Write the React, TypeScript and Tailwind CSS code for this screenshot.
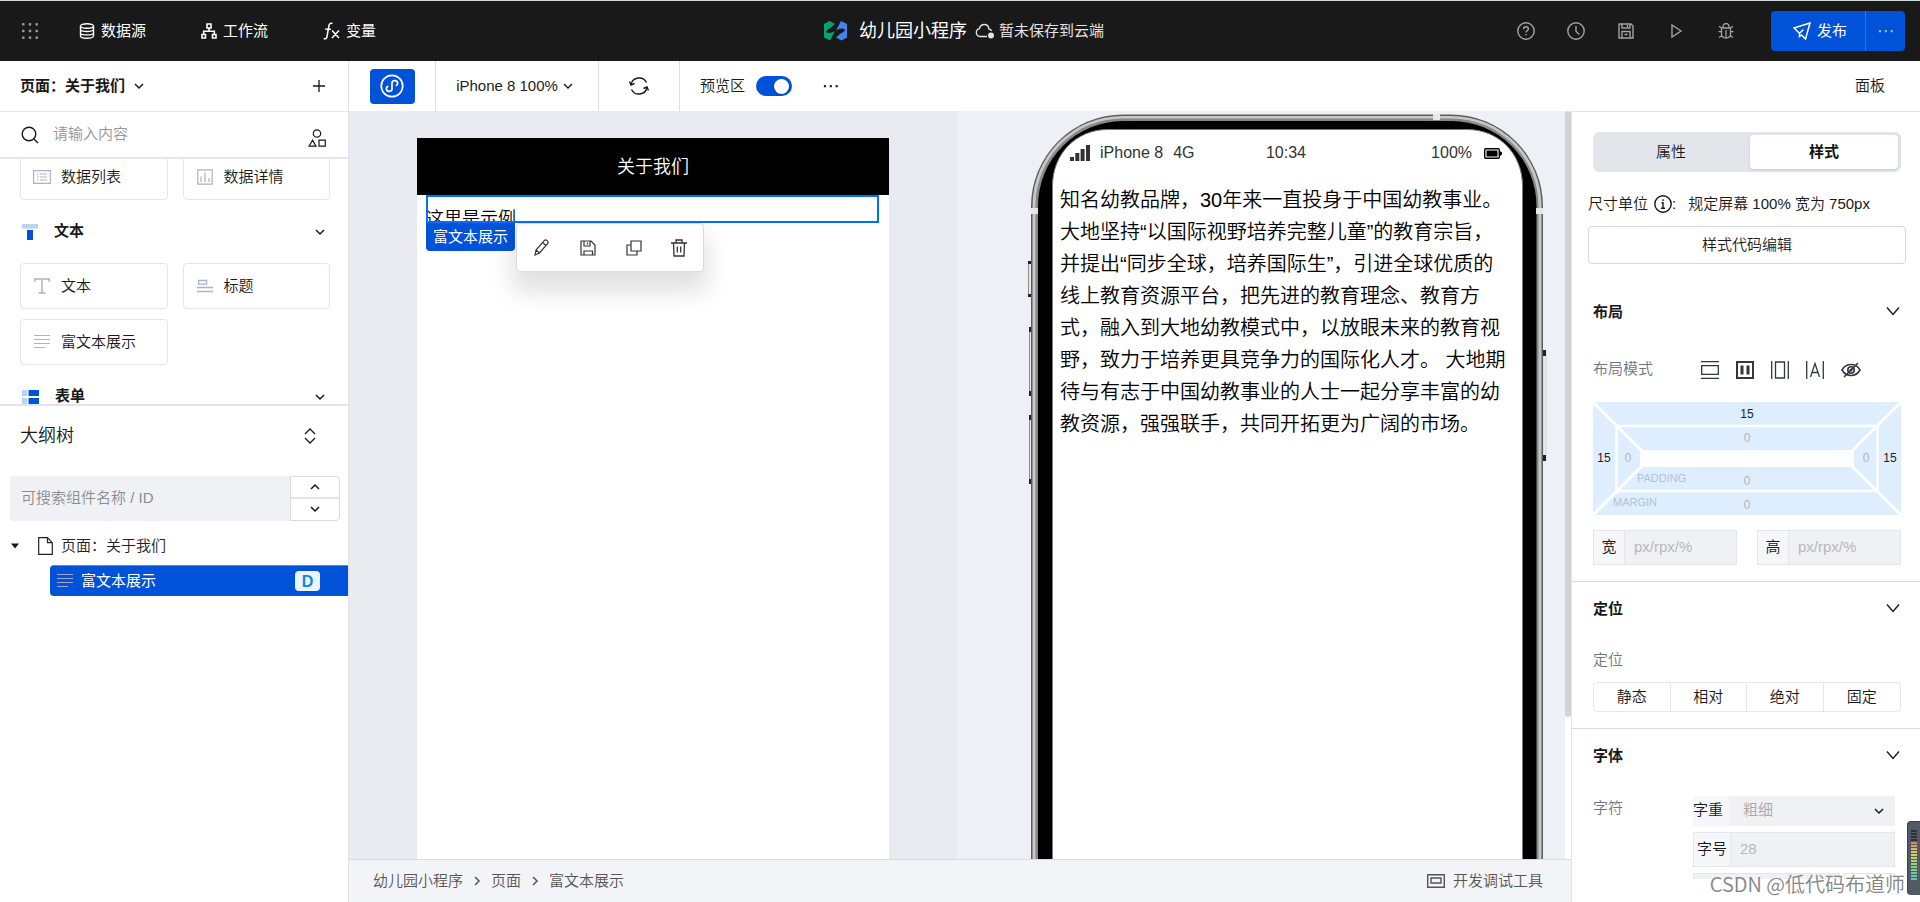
import React from "react";

type IconProps = { className?: string; children?: React.ReactNode; box?: string; sw?: number };

function Svg({ className = "size-4", children, box = "0 0 16 16", sw = 1.2 }: IconProps) {
  return (
    <svg viewBox={box} className={`shrink-0 ${className}`} fill="none" stroke="currentColor" strokeWidth={sw} aria-hidden="true">
      {children}
    </svg>
  );
}

const ChevronDown = ({ className = "size-3" }: { className?: string }) => (
  <Svg className={className} box="0 0 12 12" sw={1.5}>
    <path d="M2 4l4 4 4-4" />
  </Svg>
);

const WideChevron = () => (
  <Svg className="h-3 w-4" box="0 0 16 12" sw={1.4}>
    <path d="M2 1.5l6 7 6-7" />
  </Svg>
);

const Dots = ({ className = "h-1 w-4" }: { className?: string }) => (
  <svg viewBox="0 0 18 4" className={`shrink-0 ${className}`} fill="currentColor" aria-hidden="true">
    <rect x="1" y="1" width="2.4" height="2.4" />
    <rect x="7.6" y="1" width="2.4" height="2.4" />
    <rect x="14.2" y="1" width="2.4" height="2.4" />
  </svg>
);

const RichTextIcon = ({ className = "size-4" }: { className?: string }) => (
  <Svg className={className} sw={1}>
    <path d="M0 1.5h16M0 5.5h16M0 9.5h16M0 13.5h11" />
  </Svg>
);

const gridStops = [1.3, 8, 14.7];

function Header() {
  return (
    <header className="grid h-[61px] shrink-0 grid-cols-[1fr_auto_1fr] items-center border-t border-[#d3d9d9] bg-[#191919] text-[15px] font-normal text-white">
      <nav className="flex items-center gap-[55px] pl-[22px]">
        <button aria-label="应用" className="-mr-3.5 text-[#9b9b9b]">
          <svg viewBox="0 0 16 16" className="size-4" fill="currentColor" aria-hidden="true">
            {gridStops.map((y) => gridStops.map((x) => <rect key={`${x}-${y}`} x={x - 1.2} y={y - 1.2} width="2.4" height="2.4" />))}
          </svg>
        </button>
        <a href="#data" className="flex items-center gap-1.5">
          <Svg className="size-4" sw={1.4}>
            <ellipse cx="8" cy="3" rx="6.5" ry="2.2" />
            <path d="M1.5 3v10c0 1.2 2.9 2.2 6.5 2.2s6.500-1 6.500-2.200V3M1.500 6.300c0 1.200 2.900 2.200 6.500 2.200s6.500-1 6.500-2.200M1.500 9.700c0 1.200 2.900 2.200 6.500 2.200s6.500-1 6.500-2.200" />
          </Svg>
          数据源
        </a>
        <a href="#flow" className="flex items-center gap-1.5">
          <Svg className="size-4" sw={1.6}>
            <path d="M6 1h4v4H6zM1 11.500h3.500V15H1zM11.500 11.500H15V15h-3.500zM8 5v3M2.700 11.500V8.300h10.600v3.200" />
          </Svg>
          工作流
        </a>
        <a href="#vars" className="flex items-center gap-1.5">
          <Svg className="h-[18px] w-[17px]" box="0 0 17 18" sw={1.5}>
            <path d="M9.500 1.500C7 .8 6.200 2 5.900 4L4 14.500c-.4 2.200-1.500 2.700-3.300 2M2.200 7.200h5.600M9 8.500l7 7.500M16 8.500L9 16" />
          </Svg>
          变量
        </a>
      </nav>
      <div className="flex items-center pl-2">
        <svg viewBox="0 0 23 20" className="mr-3 h-5 w-[23px]" aria-hidden="true">
          <path d="M0 3L5.500 0 11 3 6.500 7C4 8 2.500 9 2 11c2.500 1.800 6 1 9-1L6 19.500 0 16.500z" fill="#07a36c" />
          <path d="M23 16.500L17.500 19.500 12 16.500 16.500 12.500C19 11.500 20.500 10.500 21 8.500c-2.500-1.800-6-1-9 1L17 0l6 3z" fill="#4484ee" />
        </svg>
        <h1 className="text-lg">幼儿园小程序</h1>
        <div className="ml-2 flex items-center gap-1 text-[#e3e3e3]">
          <Svg className="h-4 w-5" box="0 0 20 16" sw={1.3}>
            <path d="M12 13.500H5a4 4 0 0 1-.5-7.900C5 3 6.900 1.500 9.200 1.500c2.600 0 4.500 1.900 4.700 4.500 1.300.2 2.300.9 2.800 1.900" />
            <circle cx="16" cy="12.5" r="3" fill="currentColor" stroke="none" />
          </Svg>
          暂未保存到云端
        </div>
      </div>
      <div className="flex items-center justify-end pr-[15px]">
        <div className="mr-9 flex items-center gap-8 text-[#a3a3a3]">
          <button aria-label="帮助">
            <Svg className="size-[18px]" box="0 0 18 18" sw={1.4}>
              <circle cx="9" cy="9" r="8.2" />
              <path d="M6.600 7.200C6.600 5.700 7.600 4.800 9 4.800s2.400.9 2.400 2.200c0 1.600-2.400 1.700-2.400 3.600M9 12v1.500" />
            </Svg>
          </button>
          <button aria-label="历史">
            <Svg className="size-[18px]" box="0 0 18 18" sw={1.4}>
              <circle cx="9" cy="9" r="8.2" />
              <path d="M9 4v5.300l3.200 3.200" />
            </Svg>
          </button>
          <button aria-label="保存" className="px-px">
            <Svg className="size-4" sw={1.4}>
              <path d="M1 1h12l2 2v12H1zM4 1v4h8V1M4 15V8.500h8V15M6.500 11.500h3M9.500 2v2" />
            </Svg>
          </button>
          <button aria-label="运行" className="px-px">
            <Svg className="size-4" sw={1.4}>
              <path d="M4 2l9 6-9 6z" />
            </Svg>
          </button>
          <button aria-label="调试" className="px-px">
            <Svg className="size-4" sw={1.3}>
              <path d="M5 5V3.500a3 3 0 0 1 6 0V5M3.500 5h9v6c0 2.300-1.800 4-4.500 4s-4.500-1.700-4.500-4zM8 7v8M.5 8.700h3M12.500 8.700h3M1 3.200L3.500 5M15 3.200L12.500 5M1 14.500L3.900 12.500M15 14.500l-2.900-2" />
            </Svg>
          </button>
        </div>
        <div className="flex h-10 overflow-hidden rounded bg-[#0052d9]">
          <button className="flex w-[95px] items-center justify-center gap-1.5 border-r border-[#3373e0] pl-1">
            <Svg className="size-[18px]" box="0 0 18 18" sw={1.5}>
              <path d="M1 6L17 1 12.500 17 8.500 13 6.500 14.500V11.200zM6.500 11.200L10.500 7.500" />
            </Svg>
            发布
          </button>
          <button aria-label="更多发布选项" className="flex w-[39px] items-center justify-center text-[#9dbcf0]">
            <Dots />
          </button>
        </div>
      </div>
    </header>
  );
}

function ComponentCard({ icon, label }: { icon: React.ReactNode; label: string }) {
  return (
    <button className="flex h-[46px] items-center gap-2.5 rounded border border-[#e3e6ec] px-3 text-left">
      <span className="flex w-[18px] justify-center text-[#a9b4c6]">{icon}</span>
      {label}
    </button>
  );
}

function LeftPanel() {
  return (
    <aside className="flex w-[349px] shrink-0 flex-col border-r border-[#dfe2e8] bg-white text-[15px]">
      <div className="flex h-[51px] shrink-0 items-center justify-between border-b border-[#e3e6ea] pl-5 pr-[23px]">
        <button className="flex items-center gap-2 font-bold">
          页面：关于我们
          <ChevronDown />
        </button>
        <button aria-label="新建页面">
          <Svg className="size-3" box="0 0 12 12" sw={1.3}>
            <path d="M6 0v12M0 6h12" />
          </Svg>
        </button>
      </div>
      <div className="flex h-[47px] shrink-0 items-center gap-3.5 border-b-2 border-[#e3e6ea] pl-[21px] pr-[22px]">
        <Svg className="size-[18px]" box="0 0 18 18" sw={1.4}>
          <circle cx="8" cy="8" r="6.8" />
          <path d="M13 13l4 4" />
        </Svg>
        <input aria-label="搜索组件" placeholder="请输入内容" className="min-w-0 flex-1 outline-none placeholder:text-[#969696]" />
        <button aria-label="组件分类" className="pt-1.5">
          <Svg className="size-[18px]" box="0 0 18 18" sw={1.2}>
            <circle cx="9" cy="4.5" r="3.7" />
            <path d="M1 17.200l3.500-6 3.500 6zM11 11.200h6.300v6H11z" />
          </Svg>
        </button>
      </div>
      <section className="h-[247px] shrink-0 overflow-hidden border-b-2 border-[#e3e4e8] pl-5 pr-[18px]">
        <div className="-mt-[5px] grid grid-cols-2 gap-x-[15px]">
          <ComponentCard
            label="数据列表"
            icon={
              <Svg className="h-[14px] w-[18px]" box="0 0 18 14" sw={1.2}>
                <path d="M.6.6h16.800v12.800H.6zM4 4h1.500M7 4h7M4 7h1.500M7 7h7M4 10h1.500M7 10h7" />
              </Svg>
            }
          />
          <ComponentCard
            label="数据详情"
            icon={
              <Svg className="size-4" sw={1.2}>
                <path d="M.8.8h14.400v14.400H.8zM4 7.500V13M8 3.500V13M12 9v4" />
              </Svg>
            }
          />
        </div>
        <button className="flex h-[63px] w-full items-center pr-1 font-bold">
          <svg viewBox="0 0 16 16" className="ml-0.5 mr-4 size-4" aria-hidden="true">
            <path d="M0 0h16v4.500H0z" fill="#b9d1fb" />
            <path d="M5 6h6v10H5z" fill="#0052d9" />
          </svg>
          文本
          <ChevronDown className="ml-auto size-3" />
        </button>
        <div className="grid grid-cols-2 gap-x-[15px] gap-y-2.5">
          <ComponentCard
            label="文本"
            icon={
              <Svg className="size-4" sw={1.5}>
                <path d="M.7 4V1h14.600v3M8 1v14M4.500 15h7" />
              </Svg>
            }
          />
          <ComponentCard
            label="标题"
            icon={
              <Svg className="size-4" sw={1.3}>
                <path d="M1.600 2.500h8v3.600h-8zM0 9.500h16M0 13.500h16" />
              </Svg>
            }
          />
          <ComponentCard label="富文本展示" icon={<RichTextIcon />} />
        </div>
        <button className="flex h-[63px] w-full items-center pr-1 font-bold">
          <svg viewBox="0 0 17 16" className="ml-0.5 mr-4 h-4 w-[17px]" aria-hidden="true">
            <path d="M0 1h5v6H0zM0 9h5v6H0z" fill="#b9d1fb" />
            <path d="M6.500 1H17v6H6.500zM6.500 9H17v6H6.500z" fill="#0052d9" />
          </svg>
          表单
          <ChevronDown className="ml-auto size-3" />
        </button>
      </section>
      <section className="flex min-h-0 flex-1 flex-col">
        <div className="flex h-[60px] items-center justify-between pl-5 pr-8">
          <h2 className="text-lg">大纲树</h2>
          <button aria-label="展开或收起">
            <Svg className="h-4 w-3" box="0 0 12 16" sw={1.3}>
              <path d="M1 6l5-5 5 5M1 10l5 5 5-5" />
            </Svg>
          </button>
        </div>
        <div className="mt-2.5 flex h-[45px] px-2 pl-2.5">
          <input
            aria-label="搜索大纲树"
            placeholder="可搜索组件名称 / ID"
            className="min-w-0 flex-1 rounded-l bg-[#f0f1f5] px-[11px] outline-none placeholder:text-[#8c8c8c]"
          />
          <div className="grid w-[50px] grid-rows-2 divide-y-2 divide-[#e4e4e4] rounded-r border border-[#dcdcdc]">
            <button aria-label="上一个" className="flex items-center justify-center">
              <ChevronDown className="size-3 rotate-180" />
            </button>
            <button aria-label="下一个" className="flex items-center justify-center">
              <ChevronDown className="size-3" />
            </button>
          </div>
        </div>
        <ul>
          <li className="flex h-11 items-center pl-2.5 pt-1.5 text-[#222]">
            <svg viewBox="0 0 10 6" className="h-1.5 w-2.5 text-[#191919]" fill="currentColor" aria-hidden="true">
              <path d="M1 .5h8L5 5.500z" />
            </svg>
            <Svg className="ml-[18px] mr-2 h-[18px] w-[15px]" box="0 0 15 18" sw={1.2}>
              <path d="M.7.7h8.800l4.800 5v11.600H.7zM9.500.7v5h4.800" />
            </Svg>
            页面：关于我们
          </li>
          <li className="ml-[50px] flex h-[31px] items-center gap-2 rounded-l-sm border-t border-[#4a8bf0] bg-[#0052d9] pl-[7px] pr-7 font-normal text-white">
            <RichTextIcon className="size-4 text-[#9aa9c9]" />
            富文本展示
            <span className="ml-auto flex h-5 w-[25px] items-center justify-center rounded bg-[#eaf4fb] pt-0.5 text-base font-bold text-[#1089d3]">D</span>
          </li>
        </ul>
      </section>
    </aside>
  );
}

function Toolbar() {
  return (
    <div className="flex h-[50px] shrink-0 items-stretch bg-white text-[15px]">
      <div className="flex w-[87px] items-center justify-center border-r border-[#dcdfe5]">
        <button aria-label="小程序" className="flex h-[35px] w-[45px] items-center justify-center rounded bg-[#0052d9] text-white">
          <Svg className="size-6" box="0 0 24 24" sw={1.7}>
            <circle cx="12" cy="12" r="10.7" />
            <path d="M12 9.200v5.600a2.800 2.600 0 1 1-3.600-2.500M12 9.200a2.800 2.600 0 1 1 3.600 2.500" />
          </Svg>
        </button>
      </div>
      <button className="flex w-[163px] items-center justify-center gap-1 border-r border-[#dcdfe5] pr-1 text-[#222]">
        iPhone 8 100%
        <ChevronDown className="size-3" />
      </button>
      <button aria-label="刷新" className="flex w-[81px] items-center justify-center border-r border-[#dcdfe5]">
        <Svg className="size-5" box="0 0 20 20" sw={1.4}>
          <path d="M2 8.500A8.300 8.300 0 0 1 17.500 6.500M18 11.500A8.300 8.300 0 0 1 2.500 13.500" />
          <path d="M.5 5.500L2 9l3.500-1.500M19.500 14.500L18 11l-3.500 1.500" />
        </Svg>
      </button>
      <div className="flex items-center gap-[11px] pl-5">
        <span>预览区</span>
        <button role="switch" aria-checked="true" aria-label="预览区" className="flex h-5 w-9 items-center justify-end rounded-full bg-[#0052d9] px-[3px]">
          <span className="size-[15px] rounded-full bg-white shadow" />
        </button>
        <button aria-label="更多" className="ml-5">
          <Dots />
        </button>
      </div>
    </div>
  );
}

function Canvas() {
  return (
    <div className="flex min-w-0 justify-center bg-[#eaebf0] pt-[27px]">
      <div className="w-[472px] bg-white">
        <div className="flex h-[57px] items-center justify-center bg-black text-lg text-white">关于我们</div>
        <div className="relative ml-[9px] mr-[10px]">
          <p className="h-7 pt-2.5 text-lg leading-7 text-black">这里是示例</p>
          <div className="absolute inset-0 border-2 border-[#006eff]" />
          <div className="absolute left-0 top-full flex gap-px">
            <span className="flex h-7 w-[89px] items-center justify-center rounded-b bg-[#0052d9] text-[15px] font-normal text-white">富文本展示</span>
            <div className="flex h-[49px] w-[188px] items-center justify-between rounded border border-[#d8dbe6] bg-white px-4 text-[#333] shadow-[0_16px_24px_4px_rgba(0,0,0,0.12)]">
              <button aria-label="编辑">
                <Svg className="size-[18px]" box="0 0 18 18">
                  <path d="M2 16l1-5L11 1.800c1-1 2.200-1 3.200-.2s1.100 2 .2 3.200L6.500 14zM9.500 3.500l3.500 3M3 11l3.500 3" />
                </Svg>
              </button>
              <button aria-label="保存">
                <Svg className="size-4">
                  <path d="M1 1h10l4 4v10H1zM4 1v5h6V1M4 15v-4h8.500v4M7.500 2.500v2" />
                </Svg>
              </button>
              <button aria-label="复制">
                <Svg className="size-4">
                  <path d="M5 1h10v10H5zM5 5H1v10h10v-4" />
                </Svg>
              </button>
              <button aria-label="删除">
                <Svg className="h-[18px] w-4" box="0 0 16 18" sw={1.3}>
                  <path d="M0 4h16M5 4V1h6v3M2.500 4l.5 13h10l.5-13M6.300 7.500v6M9.700 7.500v6" />
                </Svg>
              </button>
            </div>
          </div>
        </div>
      </div>
    </div>
  );
}

const previewLines = [
  "知名幼教品牌，30年来一直投身于中国幼教事业。",
  "大地坚持“以国际视野培养完整儿童”的教育宗旨，",
  "并提出“同步全球，培养国际生”，引进全球优质的",
  "线上教育资源平台，把先进的教育理念、教育方",
  "式，融入到大地幼教模式中，以放眼未来的教育视",
  "野，致力于培养更具竞争力的国际化人才。 大地期",
  "待与有志于中国幼教事业的人士一起分享丰富的幼",
  "教资源，强强联手，共同开拓更为广阔的市场。",
];

function PhoneFrame() {
  return (
    <svg viewBox="0 0 526 1100" className="absolute left-0 top-0 h-[1100px] w-[526px]" aria-hidden="true">
      <g fill="#e8e9e8" stroke="#8b8e8e" strokeWidth="1">
        <rect x="2.500" y="148" width="5" height="34" />
        <rect x="3.500" y="214" width="4" height="64" />
        <rect x="3.500" y="302" width="4" height="67" />
        <rect x="517" y="237" width="3" height="108" stroke="#d2d3d6" />
      </g>
      <g fill="#222">
        <rect x="2" y="147" width="4" height="3" />
        <rect x="2" y="180" width="4" height="3" />
        <rect x="3" y="213" width="3" height="5" />
        <rect x="3" y="277" width="3" height="5" />
        <rect x="3" y="301" width="3" height="5" />
        <rect x="3" y="365" width="3" height="5" />
        <rect x="517" y="236" width="3" height="6" />
        <rect x="517" y="341" width="3" height="6" />
      </g>
      <rect x="5" y="0.500" width="512" height="1090" rx="92" fill="#5c5c60" />
      <rect x="6.500" y="2" width="509" height="1087" rx="90" fill="#c6c7c6" />
      <rect x="9.500" y="4.500" width="503" height="1083" rx="87" fill="#878888" />
      <rect x="12" y="7" width="498.500" height="1080" rx="85" fill="#000" />
      <path
        d="M26.500 1090V72C26.500 40 50 15.500 82 15.500h359c32 0 55.500 24.500 55.500 56.500v1018z"
        fill="#fff"
        stroke="#7c7c8c"
        strokeWidth="1"
      />
      <g fill="#e6e8e4">
        <rect x="5" y="94" width="7" height="6" />
        <rect x="510" y="94" width="7" height="6" />
        <rect x="407" y="0" width="7" height="6" />
      </g>
    </svg>
  );
}

function Preview() {
  return (
    <div className="flex min-w-0 justify-end overflow-hidden bg-[#eff0f5] pr-[13px] pt-[3px]">
      <div className="relative w-[526px] shrink-0">
        <PhoneFrame />
        <div className="relative px-[34px] text-black">
          <div className="grid h-[78px] grid-cols-3 items-center pl-2.5 pr-4 text-base text-[#333]">
            <div className="flex items-center gap-2.5">
              <svg viewBox="0 0 20 16" className="h-4 w-5" fill="currentColor" aria-hidden="true">
                <path d="M0 12h4v4H0zM5.300 8h4v8h-4zM10.600 4h4v12h-4zM16 0h4v16h-4z" />
              </svg>
              <span>iPhone 8</span>
              <span>4G</span>
            </div>
            <span className="text-center">10:34</span>
            <div className="flex items-center justify-end gap-3">
              100%
              <svg viewBox="0 0 18 11" className="h-[11px] w-[18px] text-black" aria-hidden="true">
                <rect x="0.7" y="0.7" width="14.6" height="9.6" rx="1" fill="#fff" stroke="currentColor" strokeWidth="1.4" />
                <path d="M2.500 2.500h11v6h-11zM16 3l2 1.500v2L16 8z" fill="currentColor" />
              </svg>
            </div>
          </div>
          <p className="-mt-2 whitespace-nowrap text-xl leading-8">
            {previewLines.map((line) => (
              <span key={line} className="block">
                {line}
              </span>
            ))}
          </p>
        </div>
      </div>
    </div>
  );
}

function Footer() {
  return (
    <footer className="flex h-[43px] shrink-0 items-center justify-between border-t border-[#d8dbe4] bg-[#f3f4f7] pl-6 pr-7 text-[15px] text-[#555]">
      <nav className="flex items-center gap-2">
        <a href="#app">幼儿园小程序</a>
        <ChevronDown className="size-3 -rotate-90" />
        <a href="#page">页面</a>
        <ChevronDown className="size-3 -rotate-90" />
        <a href="#component">富文本展示</a>
      </nav>
      <button className="flex items-center gap-2">
        <Svg className="h-[14px] w-[18px]" box="0 0 18 14" sw={1.4}>
          <path d="M.7.7h16.600v12.600H.7zM4 4h10v5H4z" />
        </Svg>
        开发调试工具
      </button>
    </footer>
  );
}

function SectionTitle({ children }: { children: React.ReactNode }) {
  return (
    <button className="flex w-full items-center justify-between font-bold">
      {children}
      <WideChevron />
    </button>
  );
}

function BoxModel() {
  return (
    <div className="relative text-xs text-[#b5b5b5]">
      <svg viewBox="0 0 308 113" preserveAspectRatio="none" className="absolute inset-0 size-full" aria-hidden="true">
        <path d="M0 0h308v113H0z" fill="#deeeff" />
        <path d="M23.500 24h261v65h-261z" fill="none" stroke="#fff" strokeWidth="2.5" />
        <path d="M0 0l49 49M308 0l-49 49M0 113l49-49M308 113l-49-49" stroke="#fff" strokeWidth="3" />
        <path d="M47 48h214v17H47z" fill="#fff" />
      </svg>
      <div className="relative grid grid-cols-[22px_1fr_22px] grid-rows-[24px_65px_24px]">
        <button className="col-span-3 text-[#222]">15</button>
        <button className="text-[#222]">15</button>
        <div className="grid grid-cols-[26px_1fr_26px] grid-rows-[24px_17px_24px]">
          <button className="col-span-3">0</button>
          <button>0</button>
          <span />
          <button>0</button>
          <div className="col-span-3 grid grid-cols-[1fr_auto_1fr] items-center px-[22px]">
            <span className="text-[11px] text-[#b3c2d3]">PADDING</span>
            <button className="pt-1">0</button>
          </div>
        </div>
        <button className="text-[#222]">15</button>
        <div className="col-span-3 grid grid-cols-[1fr_auto_1fr] items-center px-5">
          <span className="text-[11px] text-[#b3c2d3]">MARGIN</span>
          <button className="pt-1">0</button>
        </div>
      </div>
    </div>
  );
}

function SizeField({ label }: { label: string }) {
  return (
    <label className="flex h-[35px] min-w-0 flex-1 items-stretch border border-[#e4e6eb] bg-[#f0f1f5]">
      <span className="flex w-[31px] items-center justify-center border-r border-[#e4e6eb] bg-[#f6f7fa]">{label}</span>
      <input placeholder="px/rpx/%" className="min-w-0 flex-1 px-[9px] outline-none placeholder:text-[#b8b8b8]" />
    </label>
  );
}

function RightPanel() {
  return (
    <aside className="flex w-[349px] shrink-0 flex-col bg-white text-[15px] text-[#191919]">
      <div className="flex h-[51px] shrink-0 items-center justify-end border-b border-[#e3e3e6] pr-[35px]">
        <button>面板</button>
      </div>
      <div className="flex min-h-0 flex-1 flex-col overflow-hidden border-l border-[#e3e4e8]">
        <div className="pl-[21px] pr-[19px] pt-5">
          <div className="flex h-10 rounded-md bg-[#e2e6eb] p-[3px]">
            <button className="flex-1 pr-1">属性</button>
            <button className="w-[148px] rounded bg-white font-bold text-[#111] shadow-sm">样式</button>
          </div>
        </div>
        <div className="pl-4 pr-3.5">
          <div className="mt-5 flex h-6 items-center">
            尺寸单位
            <Svg className="ml-1.5 size-[18px]" box="0 0 18 18" sw={1.4}>
              <circle cx="9" cy="9" r="8.2" />
              <path d="M9 4.200V6M7.500 7.700H9v5.500M7 13.200h4" />
            </Svg>
            <span className="mr-3">:</span>
            规定屏幕 100% 宽为 750px
          </div>
          <button className="mt-2.5 h-[38px] w-full rounded-sm border border-[#d5d7de]">样式代码编辑</button>
        </div>
        <section className="border-b border-[#dcdde0] pb-4 pl-[21px] pr-[19px] pt-[37px]">
          <SectionTitle>布局</SectionTitle>
          <div className="mt-[34px] flex h-6 items-center text-[#70767f]">
            布局模式
            <div className="ml-12 flex items-center gap-[17px] text-[#333740]">
              <button aria-label="块级">
                <Svg className="size-[18px]" box="0 0 18 18" sw={1.3}>
                  <path d="M0 .7h18M0 17.300h18M.7 4.700h16.600v8.600H.7z" />
                </Svg>
              </button>
              <button aria-label="弹性">
                <Svg className="size-[18px]" box="0 0 18 18" sw={2}>
                  <path d="M1 1h16v16H1z" />
                  <path d="M6 4.500v9M12 4.500v9" strokeWidth="3" />
                </Svg>
              </button>
              <button aria-label="行内块">
                <Svg className="size-[18px]" box="0 0 18 18" sw={1.3}>
                  <path d="M.7 0v18M17.300 0v18M4.500 1h9v16h-9z" />
                </Svg>
              </button>
              <button aria-label="行内">
                <Svg className="size-[18px]" box="0 0 18 18" sw={1.3}>
                  <path d="M.7 0v18M17.300 0v18M4.500 16L9 2.500 13.500 16M6 11.500h6" />
                </Svg>
              </button>
              <button aria-label="隐藏">
                <Svg className="h-4 w-5" box="0 0 20 16" sw={1.6}>
                  <path d="M1 8c2-3.500 5-5.500 9-5.500S17 4.500 19 8c-2 3.500-5 5.500-9 5.500S3 11.500 1 8zM3 15L17 1" />
                  <circle cx="10" cy="8" r="3.2" />
                  <circle cx="10" cy="8" r="0.8" />
                </Svg>
              </button>
            </div>
          </div>
          <div className="mt-5">
            <BoxModel />
          </div>
          <div className="mt-[15px] flex gap-5">
            <SizeField label="宽" />
            <SizeField label="高" />
          </div>
        </section>
        <section className="border-b border-[#dcdde0] pb-4 pl-[21px] pr-[19px] pt-4">
          <SectionTitle>定位</SectionTitle>
          <p className="mt-7 leading-6 text-[#70767f]">定位</p>
          <div className="mt-2.5 grid h-[30px] grid-cols-4 divide-x divide-[#e6e7ec] rounded border border-[#e6e7ec]">
            <button>静态</button>
            <button>相对</button>
            <button>绝对</button>
            <button>固定</button>
          </div>
        </section>
        <section className="pl-[21px] pr-[19px] pt-4">
          <SectionTitle>字体</SectionTitle>
          <div className="mt-7 flex">
            <span className="w-[100px] leading-6 text-[#70767f]">字符</span>
            <div className="flex w-[202px] flex-col gap-1.5">
              <label className="relative flex h-[30px] items-stretch rounded-l bg-[#f0f1f5]">
                <span className="flex w-9 items-center bg-[#f6f7fa]">字重</span>
                <select className="min-w-0 flex-1 appearance-none bg-transparent px-3.5 text-[#a8a8a8] outline-none" defaultValue="">
                  <option value="">粗细</option>
                </select>
                <span className="pointer-events-none absolute right-2.5 top-[9px]">
                  <ChevronDown className="size-3" />
                </span>
              </label>
              <label className="flex h-[35px] items-stretch border border-[#e4e6eb] bg-[#f0f1f5]">
                <span className="flex w-[37px] items-center justify-center border-r border-[#e4e6eb] bg-[#f6f7fa]">字号</span>
                <input placeholder="28" className="min-w-0 flex-1 px-[9px] outline-none placeholder:text-[#b8b8b8]" />
              </label>
              <div className="flex h-1.5 gap-1">
                <span className="flex-1 border-x border-t border-[#e4e6eb] bg-[#f0f1f5]" />
                <span className="w-[51px] border-x border-t border-[#e4e6eb]" />
              </div>
            </div>
          </div>
        </section>
      </div>
    </aside>
  );
}

function Meter() {
  const bars = [
    "#2c303a", "#2c303a", "#2c303a", "#2c303a", "#e08a5c", "#e0a05c", "#e0b45c", "#dcc65c", "#d6d05e", "#c6d464",
    "#b2d46c", "#9cd276", "#88d082", "#78ce90", "#6acc9e", "#5ecaaa", "#58c8b2",
  ];
  return (
    <div className="absolute bottom-[7px] right-0 flex h-[74px] w-[13px] flex-col items-center gap-px rounded-l border-l border-t border-[#3c4049] bg-[#545966] pt-2">
      {bars.map((color, i) => (
        <span key={i} className="h-0.5 w-1.5" style={{ backgroundColor: color }} />
      ))}
    </div>
  );
}

export default function App() {
  return (
    <div className="relative flex h-screen flex-col overflow-hidden bg-white font-['Liberation_Sans','Noto_Sans_CJK_SC',sans-serif] font-[350] text-[#191919]">
      <Header />
      <div className="flex min-h-0 flex-1">
        <LeftPanel />
        <main className="flex min-w-0 flex-1 flex-col">
          <Toolbar />
          <div className="flex min-h-0 flex-1 overflow-hidden">
            <div className="grid min-w-0 flex-1 grid-cols-2 grid-rows-[minmax(0,1fr)]">
              <Canvas />
              <Preview />
            </div>
            <div className="w-1.5 shrink-0 bg-white">
              <div className="h-[81%] rounded-full bg-[#d3d3d3]" />
            </div>
          </div>
          <Footer />
        </main>
        <RightPanel />
      </div>
      <span className="pointer-events-none absolute bottom-1 right-[15px] font-['Noto_Sans_CJK_SC',sans-serif] text-xl leading-7 text-[#858585]">CSDN @低代码布道师</span>
      <Meter />
    </div>
  );
}
